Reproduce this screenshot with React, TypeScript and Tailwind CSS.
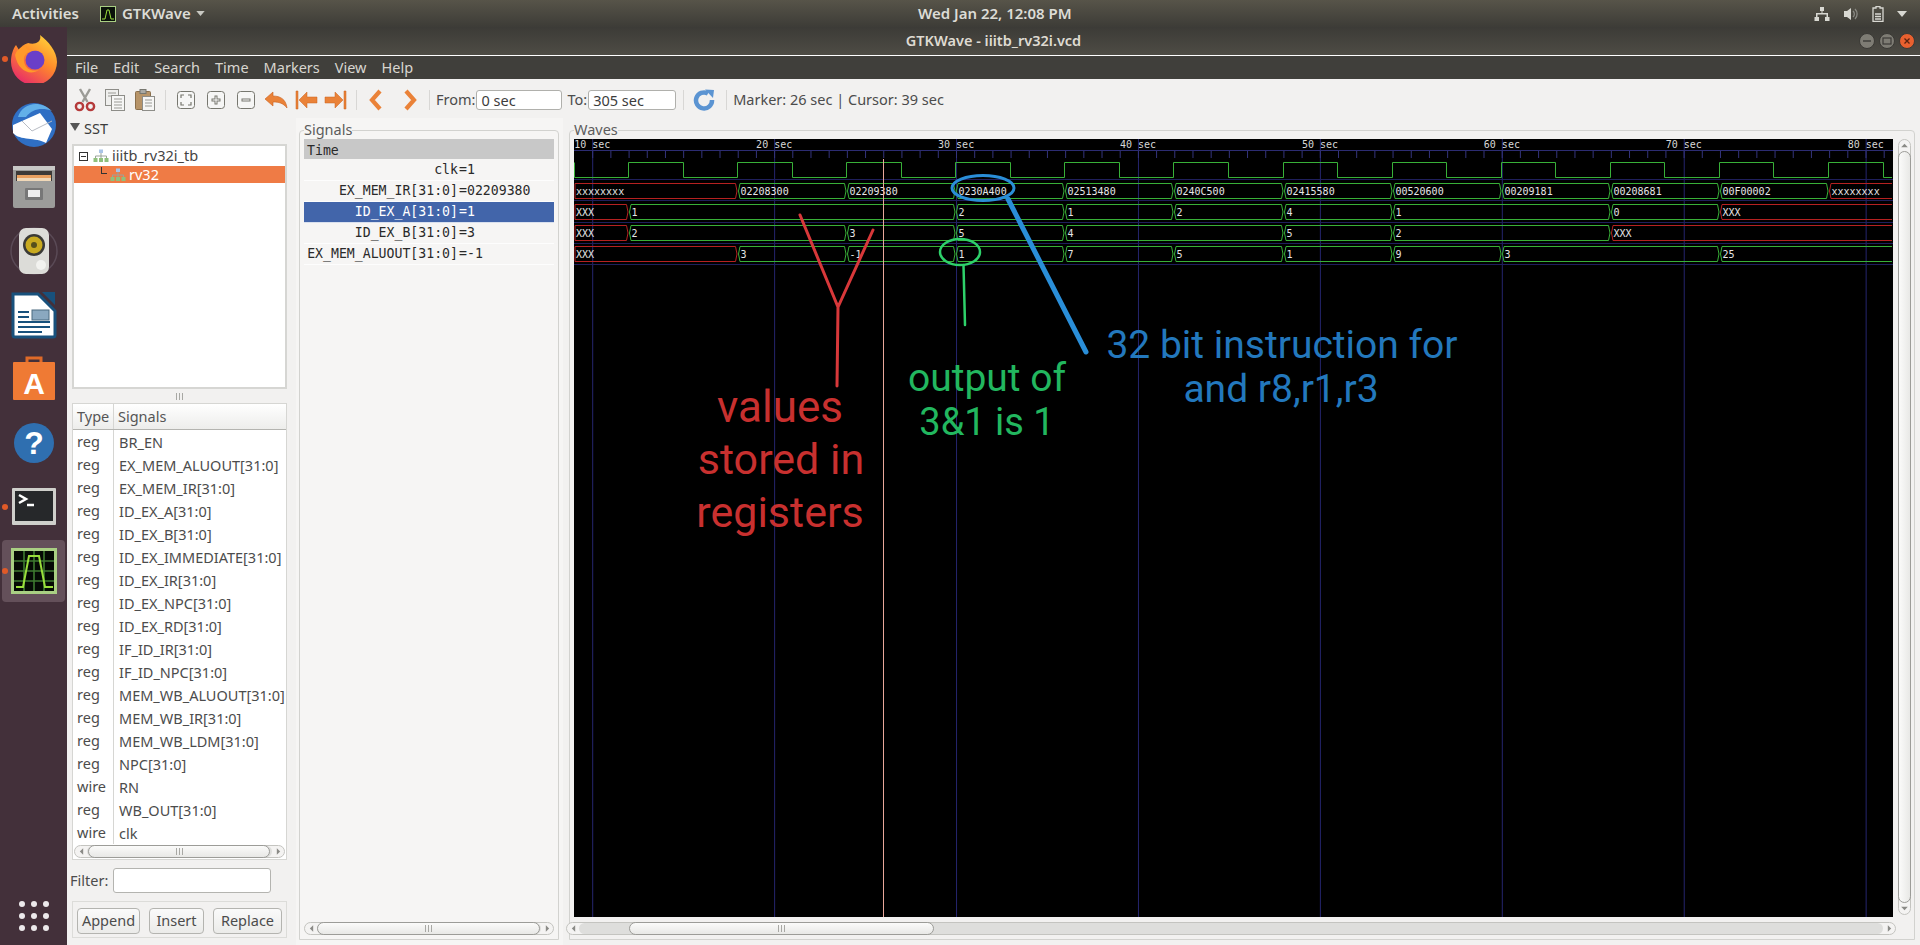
import type { ReactNode } from "react";

const MONO = "font-['DejaVu_Sans_Mono',monospace]";

interface Segment {
  x: number;
  label: string;
  red?: boolean;
}

const END = 1892;
const CLK_EDGES = [
  628, 683, 737, 792, 846, 901, 955, 1010, 1064, 1119, 1173, 1228, 1283, 1337, 1392, 1446, 1501, 1555, 1610, 1664, 1719,
  1773, 1828, 1883,
];

const ROWS: { top: number; segments: Segment[] }[] = [
  {
    top: 183.5,
    segments: [
      { x: 574, label: "xxxxxxxx", red: true },
      { x: 737, label: "02208300" },
      { x: 846, label: "02209380" },
      { x: 955, label: "0230A400" },
      { x: 1064, label: "02513480" },
      { x: 1173, label: "0240C500" },
      { x: 1283, label: "02415580" },
      { x: 1392, label: "00520600" },
      { x: 1501, label: "00209181" },
      { x: 1610, label: "00208681" },
      { x: 1719, label: "00F00002" },
      { x: 1828, label: "xxxxxxxx", red: true },
    ],
  },
  {
    top: 204.5,
    segments: [
      { x: 574, label: "XXX", red: true },
      { x: 628, label: "1" },
      { x: 955, label: "2" },
      { x: 1064, label: "1" },
      { x: 1173, label: "2" },
      { x: 1283, label: "4" },
      { x: 1392, label: "1" },
      { x: 1610, label: "0" },
      { x: 1719, label: "XXX", red: true },
    ],
  },
  {
    top: 225.5,
    segments: [
      { x: 574, label: "XXX", red: true },
      { x: 628, label: "2" },
      { x: 846, label: "3" },
      { x: 955, label: "5" },
      { x: 1064, label: "4" },
      { x: 1283, label: "5" },
      { x: 1392, label: "2" },
      { x: 1610, label: "XXX", red: true },
    ],
  },
  {
    top: 246.5,
    segments: [
      { x: 574, label: "XXX", red: true },
      { x: 737, label: "3" },
      { x: 846, label: "-1" },
      { x: 955, label: "1" },
      { x: 1064, label: "7" },
      { x: 1173, label: "5" },
      { x: 1283, label: "1" },
      { x: 1392, label: "9" },
      { x: 1501, label: "3" },
      { x: 1719, label: "25" },
    ],
  },
];

const SIGNALS = [
  ["reg", "BR_EN"],
  ["reg", "EX_MEM_ALUOUT[31:0]"],
  ["reg", "EX_MEM_IR[31:0]"],
  ["reg", "ID_EX_A[31:0]"],
  ["reg", "ID_EX_B[31:0]"],
  ["reg", "ID_EX_IMMEDIATE[31:0]"],
  ["reg", "ID_EX_IR[31:0]"],
  ["reg", "ID_EX_NPC[31:0]"],
  ["reg", "ID_EX_RD[31:0]"],
  ["reg", "IF_ID_IR[31:0]"],
  ["reg", "IF_ID_NPC[31:0]"],
  ["reg", "MEM_WB_ALUOUT[31:0]"],
  ["reg", "MEM_WB_IR[31:0]"],
  ["reg", "MEM_WB_LDM[31:0]"],
  ["reg", "NPC[31:0]"],
  ["wire", "RN"],
  ["reg", "WB_OUT[31:0]"],
  ["wire", "clk"],
];

const TRACES = [
  { name: "clk", value: "1" },
  { name: "EX_MEM_IR[31:0]", value: "02209380" },
  { name: "ID_EX_A[31:0]", value: "1", selected: true },
  { name: "ID_EX_B[31:0]", value: "3" },
  { name: "EX_MEM_ALUOUT[31:0]", value: "-1" },
];

function segmentPath(top: number, x0: number, x1: number) {
  const bot = top + 15;
  const mid = top + 7.5;
  const first = x0 === 574;
  const last = x1 === END;
  const left = first ? `M575 ${bot} L575 ${top}` : `M${x0 + 3} ${bot} L${x0 + 1.5} ${mid} L${x0 + 3} ${top}`;
  const right = last ? `L${x1} ${top} M${x1} ${bot}` : `L${x1 - 1.5} ${top} L${x1} ${mid} L${x1 - 1.5} ${bot}`;
  return `${left} ${right} L${first ? 575 : x0 + 3} ${bot}`;
}

function WaveCanvas() {
  const majors = [0, 1, 2, 3, 4, 5, 6, 7].map((i) => 592.7 + i * 181.92);
  const ticks = Array.from({ length: 72 }, (_, i) => 592.7 + i * 18.19);
  let clk = "M574.5 162.5 L574.5 177.5";
  CLK_EDGES.forEach((x, i) => {
    const from = i % 2 === 0 ? 177.5 : 162.5;
    const to = i % 2 === 0 ? 162.5 : 177.5;
    clk += ` L${x + 0.5} ${from} L${x + 0.5} ${to}`;
  });
  clk += " L1892 177.5";

  return (
    <svg viewBox="574 139 1319 778" className="block w-[1319px] h-[778px] bg-black shrink-0">
      {majors.map((x) => (
        <line key={x} x1={x} x2={x} y1={139} y2={917} stroke="#25256e" strokeWidth={1} />
      ))}
      <line x1={574} x2={1893} y1={150.5} y2={150.5} stroke="#2c2c72" />
      {ticks.map((x) => (
        <line key={x} x1={x} x2={x} y1={151} y2={158} stroke="#34347c" />
      ))}
      {[179.5, 200.5, 222.5, 243.5, 264.5].map((y) => (
        <line key={y} x1={574} x2={1893} y1={y} y2={y} stroke="#1f1f5c" />
      ))}
      {majors.map((x, i) => (
        <text key={x} x={x - 18.5} y={148} className={`${MONO} text-[10px] fill-[#d8d8d8]`}>
          {(i + 1) * 10} sec
        </text>
      ))}
      <path d={clk} fill="none" stroke="#38b038" />
      {ROWS.map((row) =>
        row.segments.map((seg, i) => {
          const next = row.segments[i + 1];
          const x1 = next ? next.x : END;
          return (
            <g key={`${row.top}-${seg.x}`}>
              <path d={segmentPath(row.top, seg.x, x1)} fill="none" stroke={seg.red ? "#b52121" : "#38b038"} />
              <text
                x={seg.x === 574 ? 576 : seg.x + 3.5}
                y={row.top + 11.5}
                className={`${MONO} text-[10px] fill-[#e6e6e6]`}
              >
                {seg.label}
              </text>
            </g>
          );
        }),
      )}
      <line x1={883.5} x2={883.5} y1={159} y2={917} stroke="#e8a79a" />

      {/* hand drawn annotations */}
      <g fill="none" strokeLinecap="round">
        <path d="M800 215 L838 307 L873 230 M838 307 L837 386" stroke="#d8383a" strokeWidth={3} />
        <ellipse cx={960} cy={252} rx={20} ry={13} stroke="#2ed16a" strokeWidth={2.5} />
        <path d="M963.5 265 L965 325" stroke="#2ed16a" strokeWidth={2.5} />
        <ellipse cx={983} cy={188} rx={31} ry={12.5} stroke="#2a8ed8" strokeWidth={3} />
        <path d="M1008 199 L1086 352" stroke="#2a8ed8" strokeWidth={5} />
      </g>
      <g textAnchor="middle" className="font-['Roboto',sans-serif] font-normal">
        <text x={780} y={422} className="text-[44px] fill-[#c8302f]">
          values
        </text>
        <text x={781} y={474} className="text-[43px] fill-[#c8302f]">
          stored in
        </text>
        <text x={780} y={527} className="text-[43px] fill-[#c8302f]">
          registers
        </text>
        <text x={987} y={391} className="text-[39px] fill-[#22b75f]">
          output of
        </text>
        <text x={987} y={435} className="text-[38px] fill-[#22b75f]">
          3&amp;1 is 1
        </text>
        <text x={1282} y={358} className="text-[39px] fill-[#2378bd]">
          32 bit instruction for
        </text>
        <text x={1281} y={402} className="text-[39px] fill-[#2378bd]">
          and r8,r1,r3
        </text>
      </g>
    </svg>
  );
}

function Arrow({ dir }: { dir: "left" | "right" | "up" | "down" }) {
  const rot = { left: "rotate-180", right: "", up: "-rotate-90", down: "rotate-90" }[dir];
  return (
    <svg viewBox="0 0 6 8" className={`w-[5px] h-[7px] ${rot}`}>
      <path d="M1 0 L5 4 L1 8 Z" fill="#8a8a86" />
    </svg>
  );
}

function GripDots({ vertical }: { vertical?: boolean }) {
  return (
    <div className={`flex gap-[2px] ${vertical ? "flex-col" : ""}`}>
      <span className={`bg-[#a8a8a4] ${vertical ? "w-[7px] h-px" : "w-px h-[7px]"}`} />
      <span className={`bg-[#a8a8a4] ${vertical ? "w-[7px] h-px" : "w-px h-[7px]"}`} />
      <span className={`bg-[#a8a8a4] ${vertical ? "w-[7px] h-px" : "w-px h-[7px]"}`} />
    </div>
  );
}

function HScrollbar({ className, thumb }: { className: string; thumb: string }) {
  return (
    <div className={`h-[13px] flex items-center rounded-full border border-[#c4c4c0] bg-[#f4f3f2] ${className}`}>
      <div className="w-[12px] flex justify-center shrink-0">
        <Arrow dir="left" />
      </div>
      <div className="flex-1 h-full bg-[#dededc] rounded-full">
        <div
          className={`h-[13px] -mt-px flex items-center justify-center rounded-full border border-[#9c9c98] bg-gradient-to-b from-[#fbfbfa] to-[#e8e8e6] ${thumb}`}
        >
          <GripDots />
        </div>
      </div>
      <div className="w-[12px] flex justify-center shrink-0">
        <Arrow dir="right" />
      </div>
    </div>
  );
}

function TreeIcon() {
  return (
    <svg viewBox="0 0 16 14" className="w-[16px] h-[14px] shrink-0">
      <rect x={6} y={0.5} width={4} height={3.5} fill="#a9c4e6" />
      <path d="M8 4 V7 M2.5 9 V7 H13.5 V9 M8 7 V9" stroke="#9aa49a" fill="none" />
      <rect x={0.5} y={9} width={4} height={4} fill="#8fc07c" />
      <rect x={6} y={9} width={4} height={4} fill="#8fc07c" />
      <rect x={11.5} y={9} width={4} height={4} fill="#8fc07c" />
    </svg>
  );
}

function ToolIcon({ width = 30, children }: { width?: number; children: ReactNode }) {
  return (
    <div className="flex items-center justify-center shrink-0 h-[36px]" style={{ width }}>
      <svg viewBox="0 0 24 24" className="w-[24px] h-[24px]">
        {children}
      </svg>
    </div>
  );
}

function ToolSep() {
  return <div className="w-px h-[20px] bg-[#d8d7d5] mx-[5px] shrink-0" />;
}

const ORANGE = "#ea8238";

function Toolbar() {
  const squareBtn = (
    <rect x={3.5} y={3.5} width={17} height={17} rx={3} fill="#f6f6f5" stroke="#77776f" strokeWidth={1} />
  );
  return (
    <div className="h-[39px] flex items-center pl-[3px] pt-[3px] bg-[#f2f1f0] text-[#4c4c4c] text-[14.5px]">
      <ToolIcon>
        <path d="M7 1 L14.5 14 M17 1 L9.5 14" stroke="#9b9b96" strokeWidth={2.4} fill="none" />
        <circle cx={6.5} cy={18.5} r={3.6} fill="none" stroke="#b53a3a" strokeWidth={2.4} />
        <circle cx={17.5} cy={18.5} r={3.6} fill="none" stroke="#b53a3a" strokeWidth={2.4} />
      </ToolIcon>
      <ToolIcon>
        <rect x={2.5} y={1.5} width={13} height={16} fill="#efefed" stroke="#8d8d88" />
        <rect x={8.5} y={7.5} width={13} height={15} fill="#f6f6f5" stroke="#8d8d88" />
        <path d="M5 5 H13 M5 8 H8 M11 11 H19 M11 14 H19 M11 17 H19 M11 20 H19" stroke="#9a9a95" fill="none" />
      </ToolIcon>
      <ToolIcon>
        <rect x={2.5} y={3.5} width={15} height={18} rx={1} fill="#b79468" stroke="#8a6f4c" />
        <rect x={7} y={1.5} width={6} height={4} fill="#a9a9a4" stroke="#77776f" />
        <rect x={9.5} y={8.5} width={12} height={14} fill="#f6f6f5" stroke="#8d8d88" />
        <path d="M12 12 H19 M12 15 H19 M12 18 H19" stroke="#9a9a95" fill="none" />
      </ToolIcon>
      <ToolSep />
      <ToolIcon width={30}>
        {squareBtn}
        <path
          d="M7 10 V7 H10 M14 7 H17 V10 M17 14 V17 H14 M10 17 H7 V14"
          fill="none"
          stroke="#77776f"
          strokeWidth={1.2}
        />
      </ToolIcon>
      <ToolIcon>
        {squareBtn}
        <path d="M12 7.5 V16.5 M7.5 12 H16.5" stroke="#77776f" strokeWidth={3} />
        <path d="M12 8.5 V15.5 M8.5 12 H15.5" stroke="#ffffff" strokeWidth={1} />
      </ToolIcon>
      <ToolIcon>
        {squareBtn}
        <path d="M7.5 12 H16.5" stroke="#77776f" strokeWidth={3} />
        <path d="M8.5 12 H15.5" stroke="#ffffff" strokeWidth={1} />
      </ToolIcon>
      <ToolIcon>
        <path d="M1 11 L9 4 V8 C16 8 22 11 23 20 C19 15 15 14 9 14 V18 Z" fill={ORANGE} stroke="#c9601f" strokeWidth={0.6} />
      </ToolIcon>
      <ToolIcon>
        <path d="M2 3 H4 V21 H2 Z" fill={ORANGE} stroke="#c9601f" strokeWidth={0.5} />
        <path d="M5 12 L13 4 V9 H23 V15 H13 V20 Z" fill={ORANGE} stroke="#c9601f" strokeWidth={0.5} />
      </ToolIcon>
      <ToolIcon>
        <path d="M22 3 H20 V21 H22 Z" fill={ORANGE} stroke="#c9601f" strokeWidth={0.5} />
        <path d="M19 12 L11 4 V9 H1 V15 H11 V20 Z" fill={ORANGE} stroke="#c9601f" strokeWidth={0.5} />
      </ToolIcon>
      <ToolSep />
      <ToolIcon>
        <path d="M15 3 L7 12 L15 21" fill="none" stroke={ORANGE} strokeWidth={4.2} />
      </ToolIcon>
      <div className="w-[2px] shrink-0" />
      <ToolIcon>
        <path d="M9 3 L17 12 L9 21" fill="none" stroke={ORANGE} strokeWidth={4.2} />
      </ToolIcon>
      <ToolSep />
      <span className="ml-[1px] mr-[1px]">From:</span>
      <div className="w-[86px] h-[20px] leading-[19px] pl-[4px] rounded-[3px] border border-[#b0b0ac] bg-white text-[#3c3c3c]">
        0 sec
      </div>
      <span className="ml-[5px] mr-[1px]">To:</span>
      <div className="w-[88px] h-[20px] leading-[19px] pl-[4px] rounded-[3px] border border-[#b0b0ac] bg-white text-[#3c3c3c]">
        305 sec
      </div>
      <div className="w-px h-[20px] bg-[#d8d7d5] ml-[7px] shrink-0" />
      <ToolIcon width={42}>
        <path d="M19 12 A8 8 0 1 1 15 5.5" fill="none" stroke="#5b94d2" strokeWidth={4.5} />
        <path d="M12 1.5 L21 2 L20 10 Z" fill="#5b94d2" />
      </ToolIcon>
      <div className="w-px h-[20px] bg-[#d8d7d5] shrink-0" />
      <span className="ml-[6px]">Marker: 26 sec | Cursor: 39 sec</span>
    </div>
  );
}

function SstPane() {
  return (
    <div className="w-[229px] shrink-0 flex flex-col pl-[5px] pr-[9px] text-[#3c3c3c] text-[14.5px]">
      <div className="h-[26px] flex items-center gap-[4px] pb-[4px] -ml-[2px]">
        <svg viewBox="0 0 10 8" className="w-[10px] h-[8px] -mt-[5px]">
          <path d="M0 0 H10 L5 8 Z" fill="#555" />
        </svg>
        <span>SST</span>
      </div>
      <div className="h-[245px] border-2 border-[#d6d6d3] bg-white">
        <div className="h-[20px] flex items-center pl-[5px] gap-[5px] relative">
          <div className="w-[9px] h-[9px] border border-[#333] flex items-center justify-center shrink-0">
            <span className="w-[5px] h-px bg-[#333]" />
          </div>
          <TreeIcon />
          <span className="-ml-[2px] text-[#444]">iiitb_rv32i_tb</span>
        </div>
        <div className="h-[17px] flex items-center pl-[27px] gap-[3px] bg-[#ef7b45] text-white">
          <span className="w-[6px] h-[7px] -mt-[8px] border-l border-b border-[#333] shrink-0" />
          <TreeIcon />
          <span>rv32</span>
        </div>
      </div>
      <div className="h-[14px] flex items-center justify-center">
        <GripDots />
      </div>
      <div className="h-[457px] border border-[#d6d6d3] bg-white flex flex-col">
        <div className="h-[26px] flex border-b border-[#b4b4b0] bg-gradient-to-b from-white to-[#ededeb] shrink-0 text-[#555]">
          <div className="w-[41px] pl-[4px] border-r border-[#d6d6d3] leading-[25px]">Type</div>
          <div className="pl-[4px] leading-[25px]">Signals</div>
        </div>
        <div className="flex flex-col flex-1">
          {SIGNALS.map(([kind, name], i) => (
            <div key={`${name}-${i}`} className="h-[23px] flex items-center shrink-0 text-[#4c4c4c] whitespace-nowrap">
              <div className="w-[41px] h-full pl-[4px] border-r border-[#d6d6d3] leading-[22px]">{kind}</div>
              <div className="pl-[5px] leading-[22px]">{name}</div>
            </div>
          ))}
        </div>
        <HScrollbar className="mx-px mb-px" thumb="ml-[1px] w-[182px]" />
      </div>
      <div className="h-[41px] flex items-center -ml-[2px]">
        <span className="w-[43px] shrink-0 text-[#4c4c4c]">Filter:</span>
        <div className="w-[158px] h-[25px] rounded-[3px] border border-[#b4b4b0] bg-white" />
      </div>
      <div className="h-[37px] flex items-center pl-[4px] pt-[2px] gap-[9px] border border-[#dcdcd9] text-[#4c4c4c]">
        <Btn label="Append" width="w-[63px]" />
        <Btn label="Insert" width="w-[55px]" />
        <Btn label="Replace" width="w-[69px]" />
      </div>
    </div>
  );
}

function Btn({ label, width }: { label: string; width: string }) {
  return (
    <div
      className={`h-[26px] flex items-center justify-center rounded-[4px] border border-[#b4b4b0] bg-gradient-to-b from-[#fafafa] to-[#ebebe9] ${width}`}
    >
      {label}
    </div>
  );
}

function SignalsPane() {
  return (
    <div className="w-[267px] shrink-0 bg-[#f6f5f4] pl-[3px] pr-[4px] pb-[5px] flex flex-col">
      <div className="flex-1 mt-[12px] relative rounded-t-[4px] border border-[#d2d2cf] flex flex-col px-[4px]">
        <span className="absolute -top-[11px] left-[4px] bg-[#f6f5f4] text-[14.5px] leading-[18px] text-[#5c5c5c]">
          Signals
        </span>
        <div className={`mt-[8px] ${MONO} text-[13.2px] text-[#2a2a2a] flex-1 flex flex-col`}>
          <div className="h-[20px] mb-[1px] bg-[#c8c8c8] pl-[3px] pt-[2px] leading-[20px]">Time</div>
          {TRACES.map((t) => (
            <div
              key={t.name}
              className={`h-[21px] flex items-center border-b border-white/80 whitespace-nowrap ${t.selected ? "bg-[#4265aa] text-white" : ""}`}
            >
              <span className="w-[154px] text-right shrink-0">{t.name}</span>
              <span className="ml-[1px]">={t.value}</span>
            </div>
          ))}
        </div>
        <HScrollbar className="mb-[4px]" thumb="w-[223px]" />
      </div>
    </div>
  );
}

function WavesPane() {
  return (
    <div className="flex-1 min-w-0 pr-[5px] pb-[5px] pl-[6px] flex flex-col">
      <div className="flex-1 mt-[12px] relative rounded-t-[4px] border border-[#d2d2cf] flex flex-col">
        <span className="absolute -top-[11px] left-[4px] bg-[#f2f1f0] text-[14.5px] leading-[18px] text-[#5c5c5c]">
          Waves
        </span>
        <div className="flex mt-[8px] pl-[4px]">
          <WaveCanvas />
          <div className="ml-[5px] w-[13px] h-[776px] flex flex-col items-center rounded-full border border-[#c4c4c0] bg-[#f4f3f2]">
            <div className="h-[11px] flex items-center">
              <Arrow dir="up" />
            </div>
            <div className="flex-1 w-[13px] rounded-full border border-[#9c9c98] bg-gradient-to-r from-[#fbfbfa] to-[#e8e8e6] -mx-px" />
            <div className="h-[11px] flex items-center">
              <Arrow dir="down" />
            </div>
          </div>
        </div>
        <HScrollbar className="mx-[-4px] mt-[5px] w-[1330px]" thumb="ml-[50px] w-[305px]" />
      </div>
    </div>
  );
}

function DockItem({ running, active, children }: { running?: boolean; active?: boolean; children: ReactNode }) {
  return (
    <div className="relative h-[64px] flex items-center justify-center shrink-0">
      {active && <div className="absolute inset-x-[2px] inset-y-[1px] rounded-[4px] bg-[#64505a]" />}
      {running && <span className="absolute left-[2px] top-[29px] w-[6px] h-[6px] rounded-full bg-[#e05a28]" />}
      <svg viewBox="0 0 48 48" className="relative w-[48px] h-[48px]">
        {children}
      </svg>
    </div>
  );
}

function Dock() {
  const dots = [0, 1, 2, 3, 4, 5, 6, 7, 8];
  return (
    <div className="w-[67px] shrink-0 flex flex-col bg-[#43303a]">
      <DockItem running>
        <defs>
          <linearGradient id="ff" x1="0.8" y1="0" x2="0.2" y2="1">
            <stop offset="0" stopColor="#ffd43a" />
            <stop offset="0.45" stopColor="#ff8a2a" />
            <stop offset="1" stopColor="#e6246e" />
          </linearGradient>
        </defs>
        <path d="M30 0 C38 6 47 16 47 27 A23 23 0 0 1 1 27 C1 20 3 14 6 10 L9 15 C12 10 16 9 18 8 C24 10 32 8 30 0 Z" fill="url(#ff)" />
        <circle cx={25} cy={25} r={9.5} fill="#6a3fc8" />
        <path d="M5 20 C8 12 14 11 17 11 C14 15 20 15 27 16 C19 15 13 19 14 26 C15 34 22 37 29 35 C20 41 8 36 5 20 Z" fill="#ff9a2a" />
      </DockItem>
      <DockItem>
        <circle cx={24} cy={26} r={22} fill="#2f6fc4" />
        <path d="M8 18 C12 4 30 0 42 12 C32 8 22 10 16 18 Z" fill="#63b0e8" />
        <path d="M3 26 L30 14 L42 30 L36 44 C26 38 10 42 3 34 Z" fill="#ffffff" />
        <path d="M12 22 L22 32 L42 22" stroke="#b8bcc4" fill="none" />
      </DockItem>
      <DockItem>
        <rect x={3} y={3} width={42} height={42} rx={2} fill="#9c9c9a" />
        <rect x={3} y={3} width={42} height={4} fill="#c8c8c6" />
        <rect x={6} y={8} width={36} height={10} fill="#3c3a38" />
        <rect x={7} y={12} width={34} height={6} fill="#e8a060" />
        <rect x={7} y={15} width={34} height={3} fill="#f0d8b8" />
        <rect x={15} y={25} width={18} height={12} rx={1} fill="#777" />
        <rect x={18} y={27} width={12} height={7} fill="#eee" />
      </DockItem>
      <DockItem>
        <circle cx={24} cy={24} r={23} fill="none" stroke="#5a4a56" strokeWidth={1.5} />
        <rect x={9} y={1} width={30} height={46} rx={7} fill="#dcdcd8" />
        <circle cx={24} cy={18} r={11} fill="#3a3a36" />
        <circle cx={24} cy={18} r={8.5} fill="#c8aa20" />
        <circle cx={24} cy={18} r={3} fill="#55501c" />
        <circle cx={31} cy={38} r={5} fill="#f2f2ef" />
      </DockItem>
      <DockItem>
        <path d="M3 3 H28 L45 20 V44 A2 2 0 0 1 43 46 H5 A2 2 0 0 1 3 44 Z" fill="#fff" stroke="#18517c" strokeWidth={3} />
        <path d="M32 1 H45 V14 Z" fill="#18517c" />
        <path d="M8 21 H19 M8 26 H19 M8 31 H40 M8 36 H40 M8 41 H32" stroke="#18517c" strokeWidth={2} />
        <rect x={22} y={19} width={17} height={10} fill="#8aa8c0" stroke="#4b6a80" />
      </DockItem>
      <DockItem>
        <path d="M17 8 V3 H31 V8" fill="none" stroke="#e06a28" strokeWidth={3} />
        <rect x={3} y={7} width={42} height={38} rx={1} fill="#ef7a34" />
        <text x={24} y={39} textAnchor="middle" className="font-['Liberation_Sans',sans-serif] font-bold text-[30px] fill-white">
          A
        </text>
      </DockItem>
      <DockItem>
        <circle cx={24} cy={24} r={20} fill="#2f6fb0" />
        <text x={24} y={35} textAnchor="middle" className="font-['Liberation_Sans',sans-serif] font-bold text-[32px] fill-white">
          ?
        </text>
      </DockItem>
      <DockItem running>
        <rect x={2} y={5} width={44} height={37} rx={1} fill="#cfcfcb" />
        <rect x={5} y={8} width={38} height={30} fill="#26282a" />
        <path d="M9 12 L16 16 L9 20" fill="none" stroke="#fff" strokeWidth={2.5} />
        <path d="M17 22 H24" stroke="#fff" strokeWidth={2.5} />
      </DockItem>
      <DockItem running active>
        <rect x={1} y={1} width={46} height={46} fill="#a9cf83" />
        <rect x={4} y={4} width={40} height={40} fill="#050a05" />
        <path
          d="M14 4 V44 M24 4 V44 M34 4 V44 M4 14 H44 M4 24 H44 M4 34 H44"
          stroke="#3e7a30"
          strokeWidth={1.6}
        />
        <path d="M6 40 H13 L19 9 H29 L35 40 H43" fill="none" stroke="#9ade3c" strokeWidth={2} />
      </DockItem>
      <div className="mt-auto mb-[14px] mx-auto grid grid-cols-3 gap-x-[6px] gap-y-[6px]">
        {dots.map((d) => (
          <span key={d} className="w-[6px] h-[6px] rounded-full bg-[#ece9eb]" />
        ))}
      </div>
    </div>
  );
}

function TopBar() {
  return (
    <div className="h-[27px] shrink-0 flex items-center bg-gradient-to-b from-[#575449] to-[#3d3c37] text-[#dcdcd6] text-[15px] font-semibold">
      <span className="ml-[12px]">Activities</span>
      <svg viewBox="0 0 16 16" className="ml-[21px] w-[16px] h-[16px]">
        <rect width={16} height={16} fill="#a9cf83" />
        <rect x={1} y={1} width={14} height={14} fill="#0a120a" />
        <path d="M2 13 H5 L7 4 H9 L11 13 H14" fill="none" stroke="#9ade3c" />
      </svg>
      <span className="ml-[6px]">GTKWave</span>
      <svg viewBox="0 0 10 6" className="ml-[5px] w-[9px] h-[5px]">
        <path d="M0 0 H10 L5 6 Z" fill="#c8c8c2" />
      </svg>
      <span className="absolute left-[918px] whitespace-nowrap">Wed Jan 22, 12:08 PM</span>
      <div className="ml-auto mr-[13px] flex items-center gap-[13px]">
        <svg viewBox="0 0 16 16" className="w-[16px] h-[16px]">
          <path d="M6 1 H10 V5 H8.5 V7 H14 V11 H15.5 V15 H11 V11 H12.5 V8.5 H3.5 V11 H5 V15 H0.5 V11 H2 V7 H7.5 V5 H6 Z" fill="#d8d8d2" />
        </svg>
        <svg viewBox="0 0 16 16" className="w-[16px] h-[16px]">
          <path d="M1 5 H4 L8 2 V14 L4 11 H1 Z" fill="#d8d8d2" />
          <path d="M10 5 A4 4 0 0 1 10 11 M12 3 A7 7 0 0 1 12 13" fill="none" stroke="#8a8a84" strokeWidth={1.3} />
        </svg>
        <svg viewBox="0 0 12 16" className="w-[12px] h-[16px]">
          <path d="M4 0.5 H8 V2 H11 V15.5 H1 V2 H4 Z" fill="none" stroke="#d8d8d2" strokeWidth={1.3} />
          <path d="M3 8 H9 M3 10.5 H9 M3 13 H9" stroke="#d8d8d2" strokeWidth={1.5} />
        </svg>
        <svg viewBox="0 0 10 6" className="w-[10px] h-[6px]">
          <path d="M0 0 H10 L5 6 Z" fill="#d8d8d2" />
        </svg>
      </div>
    </div>
  );
}

function WindowButton({ children, close }: { children: ReactNode; close?: boolean }) {
  return (
    <div
      className={`w-[16px] h-[16px] rounded-full flex items-center justify-center border border-[#3a3935] ${close ? "bg-[#e9602f]" : "bg-[#7e7c74]"}`}
    >
      <svg viewBox="0 0 10 10" className="w-[10px] h-[10px]">
        {children}
      </svg>
    </div>
  );
}

function TitleBar() {
  return (
    <div className="h-[28px] shrink-0 flex items-center relative bg-gradient-to-b from-[#3c3b37] to-[#4e4c45]">
      <span className="flex-1 text-center text-[14.5px] font-semibold text-[#dfdbd2]">GTKWave - iiitb_rv32i.vcd</span>
      <div className="absolute right-[5px] top-[6px] flex gap-[4px]">
        <WindowButton>
          <path d="M1 5 H9" stroke="#3c3b37" strokeWidth={1.4} />
        </WindowButton>
        <WindowButton>
          <rect x={1} y={2} width={8} height={6} fill="none" stroke="#3c3b37" strokeWidth={1.2} />
        </WindowButton>
        <WindowButton close>
          <path d="M2.5 2.5 L7.5 7.5 M7.5 2.5 L2.5 7.5" stroke="#5a2310" strokeWidth={1.3} />
        </WindowButton>
      </div>
    </div>
  );
}

export default function App() {
  return (
    <div className="relative w-[1920px] h-[945px] overflow-hidden flex flex-col bg-[#f2f1f0] font-['Noto_Sans',sans-serif]">
      <TopBar />
      <div className="flex flex-1 min-h-0">
        <Dock />
        <div className="flex-1 min-w-0 flex flex-col">
          <TitleBar />
          <div className="h-[24px] shrink-0 flex items-center gap-[15px] pl-[8px] border-t border-white bg-[#403f3b] text-[14.5px] text-[#d8d6d0]">
            {["File", "Edit", "Search", "Time", "Markers", "View", "Help"].map((m) => (
              <span key={m}>{m}</span>
            ))}
          </div>
          <Toolbar />
          <div className="flex flex-1 min-h-0">
            <SstPane />
            <SignalsPane />
            <WavesPane />
          </div>
        </div>
      </div>
    </div>
  );
}
